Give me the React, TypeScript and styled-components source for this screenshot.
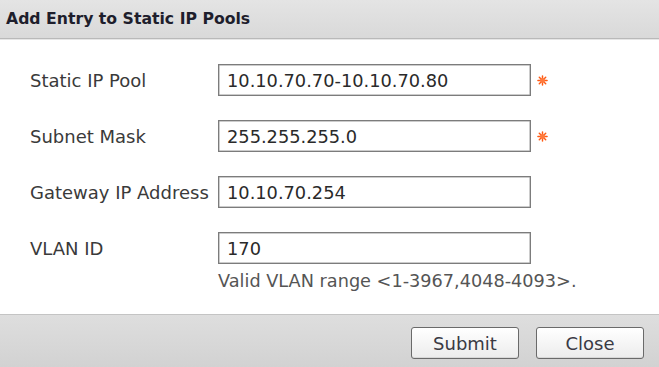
import styled, { createGlobalStyle } from 'styled-components';

const GlobalStyle = createGlobalStyle`
  html, body {
    margin: 0;
    padding: 0;
    background: #ffffff;
  }
  body {
    font-family: 'DejaVu Sans', Verdana, sans-serif;
  }
`;

const fields = [
  { label: 'Static IP Pool', value: '10.10.70.70-10.10.70.80', required: true },
  { label: 'Subnet Mask', value: '255.255.255.0', required: true },
  { label: 'Gateway IP Address', value: '10.10.70.254', required: false },
  {
    label: 'VLAN ID',
    value: '170',
    required: false,
    hint: 'Valid VLAN range <1-3967,4048-4093>.',
  },
];

function RequiredMark() {
  return (
    <Mark viewBox="0 0 12 12" aria-label="required">
      <g stroke="#ff5a14" strokeWidth="1.6" strokeLinecap="round">
        <line x1="6" y1="1" x2="6" y2="11" />
        <line x1="1" y1="6" x2="11" y2="6" />
        <line x1="2.5" y1="2.5" x2="9.5" y2="9.5" />
        <line x1="9.5" y1="2.5" x2="2.5" y2="9.5" />
      </g>
      <circle cx="6" cy="6" r="2.6" fill="#ff7a3c" />
    </Mark>
  );
}

export default function App() {
  return (
    <Dialog>
      <GlobalStyle />
      <TitleBar>Add Entry to Static IP Pools</TitleBar>
      <Form>
        {fields.map((f) => (
          <Row key={f.label}>
            <Label>{f.label}</Label>
            <Field>
              <InputLine>
                <Input defaultValue={f.value} />
                {f.required && <RequiredMark />}
              </InputLine>
              {f.hint && <Hint>{f.hint}</Hint>}
            </Field>
          </Row>
        ))}
      </Form>
      <Footer>
        <Button>Submit</Button>
        <Button>Close</Button>
      </Footer>
    </Dialog>
  );
}

const Dialog = styled.div`
  width: 659px;
  height: 367px;
  display: flex;
  flex-direction: column;
  background: #ffffff;
  overflow: hidden;
`;

const TitleBar = styled.div`
  height: 39px;
  flex-shrink: 0;
  display: flex;
  align-items: center;
  padding: 0 0 2px 6px;
  box-sizing: border-box;
  background: linear-gradient(#e4e4e4, #d9d9d9);
  border-bottom: 1px solid #b9b9b9;
  box-shadow: 0 1px 0 #e6e6e6;
  color: #1e1e2c;
  font-size: 15.7px;
  font-weight: bold;
`;

const Form = styled.div`
  flex: 1;
  display: flex;
  flex-direction: column;
  gap: 24px;
  padding: 25px 0 0 30px;
`;

const Row = styled.div`
  display: flex;
  align-items: flex-start;
`;

const Label = styled.div`
  width: 188px;
  height: 32px;
  display: flex;
  align-items: center;
  color: #3a3a3a;
  font-size: 18px;
  white-space: nowrap;
`;

const Field = styled.div`
  display: flex;
  flex-direction: column;
`;

const InputLine = styled.div`
  display: flex;
  align-items: center;
  gap: 6px;
`;

const Input = styled.input`
  width: 313px;
  height: 32px;
  box-sizing: border-box;
  padding: 0 8px;
  border: 1px solid #7c7c7c;
  box-shadow: inset 0 0 0 0.5px #9a9a9a;
  border-radius: 0;
  background: #ffffff;
  color: #2a2a2a;
  font-family: 'DejaVu Sans', Verdana, sans-serif;
  font-size: 17.8px;
  outline: none;
`;

const Mark = styled.svg`
  width: 11px;
  height: 11px;
`;

const Hint = styled.div`
  margin-top: 7px;
  color: #555555;
  font-size: 17.7px;
  white-space: nowrap;
`;

const Footer = styled.div`
  height: 53px;
  flex-shrink: 0;
  box-sizing: border-box;
  display: flex;
  justify-content: flex-end;
  align-items: flex-start;
  gap: 17px;
  padding: 12px 15px 0 0;
  background: linear-gradient(#dedede, #d2d2d2);
  border-top: 1px solid #c4c4c4;
`;

const Button = styled.button`
  width: 108px;
  height: 32px;
  border: 1px solid #6a6a6a;
  border-radius: 3px;
  background: linear-gradient(#ffffff, #ececec);
  box-shadow: inset 0 -1px 0 #d8d8d8;
  color: #3a3a44;
  font-family: 'DejaVu Sans', Verdana, sans-serif;
  font-size: 18px;
  padding: 0;
  cursor: pointer;
`;
